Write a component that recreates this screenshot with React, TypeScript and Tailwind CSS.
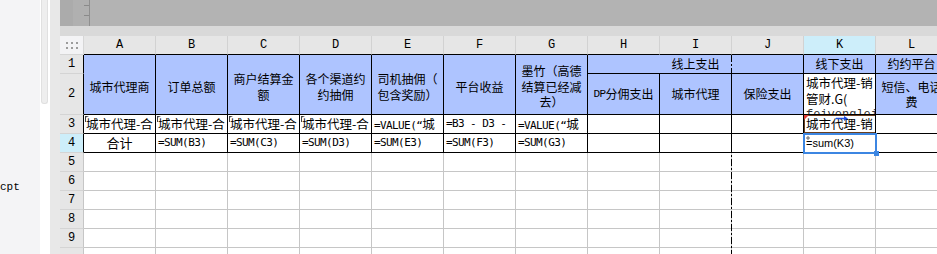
import React from 'react';

const COLS = ['A', 'B', 'C', 'D', 'E', 'F', 'G', 'H', 'I', 'J', 'K', 'L'];

const cjk = "font-['Noto_Sans_CJK_SC',sans-serif]";
const mono = "font-['DejaVu_Sans_Mono','Noto_Sans_CJK_SC',monospace] text-[11px] tracking-[-0.6px]";
const serifMono = "font-['Liberation_Mono','Noto_Sans_CJK_SC',monospace]";

// merged header cells A-G (rows 1-2)
const heads: string[][] = [
  ['城市代理商'],
  ['订单总额'],
  ['商户结算金', '额'],
  ['各个渠道约', '约抽佣'],
  ['司机抽佣（', '包含奖励）'],
  ['平台收益'],
  ['墨竹（高德', '结算已经减', '去）'],
];

const Marker: React.FC = () => (
  <svg className="absolute left-px top-px" width="4" height="6" viewBox="0 0 4 6">
    <path d="M0 0 L4 0 L1 1.5 L1 6 L0 6 Z" fill="#444" />
  </svg>
);

const RowNum: React.FC<{ n?: number; dark?: boolean; active?: boolean }> = ({ n, dark, active }) => (
  <div
    className={`${active ? 'bg-[#cdeefa]' : 'bg-[#e6e6e6]'} border-r border-b ${
      dark ? 'border-r-black' : 'border-r-[#c6c6c6]'
    } border-b-[#d4d4d4] flex items-center justify-center text-[12px] text-black ${serifMono}`}
  >
    {n}
  </div>
);

const Sheet: React.FC = () => {
  return (
    <div className="relative grid w-max grid-cols-[24px_repeat(12,72px)] grid-rows-[19px_19px_41px_19px_19px_19px_19px_19px_19px_19px_19px] text-black">
      {/* column header */}
      <div className="bg-[#f3f3f5] border-r border-b border-[#d6d6d6] flex items-center justify-center">
        <svg width="12" height="7" viewBox="0 0 12 7">
          {[0, 5, 10].map(x =>
            [0, 5].map(y => <rect key={`${x}-${y}`} x={x} y={y} width="2" height="2" fill="#9c9c9c" />)
          )}
        </svg>
      </div>
      {COLS.map(c => (
        <div
          key={c}
          className={`${c === 'K' ? 'bg-[#cdeefa]' : 'bg-[#e6e6e6]'} border-r border-r-[#d2d2d2] border-b border-b-black flex items-center justify-center text-[12px] ${serifMono}`}
        >
          {c}
        </div>
      ))}

      {/* row 1 */}
      <RowNum n={1} dark />
      {heads.map((lines, i) => (
        <div
          key={i}
          className={`row-span-2 bg-[#aec4ff] border-r border-b border-black flex flex-col items-center justify-center pt-[4px] text-[12px] leading-[15.5px] ${cjk}`}
        >
          {lines.map(l => (
            <span key={l} className="whitespace-nowrap">{l}</span>
          ))}
        </div>
      ))}
      <div className={`col-span-3 bg-[#aec4ff] border-r border-b border-black flex items-center justify-center text-[12px] ${cjk}`}>
        线上支出
      </div>
      <div className={`bg-[#aec4ff] border-r border-b border-black flex items-center justify-center text-[12px] ${cjk}`}>
        线下支出
      </div>
      <div className={`bg-[#aec4ff] border-r border-b border-black flex items-center justify-center text-[12px] whitespace-nowrap overflow-hidden ${cjk}`}>
        约约平台
      </div>

      {/* row 2 */}
      <RowNum n={2} dark />
      <div className={`bg-[#aec4ff] border-r border-b border-black flex items-center justify-center text-[12px] whitespace-nowrap ${cjk}`}>
        <span className={`${serifMono} text-[11px] tracking-[-0.5px]`}>DP</span>分佣支出
      </div>
      <div className={`bg-[#aec4ff] border-r border-b border-black flex items-center justify-center text-[12px] ${cjk}`}>
        城市代理
      </div>
      <div className={`bg-[#aec4ff] border-r border-b border-black flex items-center justify-center text-[12px] ${cjk}`}>
        保险支出
      </div>
      <div className={`bg-white border-r border-b border-black overflow-hidden pl-[2px] pt-px text-[12.5px] leading-[16px] whitespace-nowrap ${cjk}`}>
        <div>城市代理-销</div>
        <div>管财.G(</div>
        <div className={`${serifMono} text-[12px] text-[#333]`}>feiyongleix</div>
      </div>
      <div className={`bg-[#aec4ff] border-r border-b border-black flex flex-col items-center justify-center text-[12px] leading-[15.5px] whitespace-nowrap ${cjk}`}>
        <span>短信、电话</span>
        <span>费</span>
      </div>

      {/* row 3 */}
      <RowNum n={3} dark />
      {[0, 1, 2, 3].map(i => (
        <div key={i} className={`relative bg-white border-r border-b border-black overflow-hidden pl-[2px] text-[12.5px] leading-[17px] whitespace-nowrap ${cjk}`}>
          <Marker />
          城市代理-合
        </div>
      ))}
      <div className={`bg-white border-r border-b border-black overflow-hidden pl-[2px] leading-[17px] whitespace-nowrap ${mono}`}>
        =VALUE(“<span className={`${cjk} text-[12.5px] tracking-normal`}>城</span>
      </div>
      <div className={`bg-white border-r border-b border-black overflow-hidden pl-[2px] leading-[17px] whitespace-pre ${mono}`}>
        =B3 - D3 -
      </div>
      <div className={`bg-white border-r border-b border-black overflow-hidden pl-[2px] leading-[17px] whitespace-nowrap ${mono}`}>
        =VALUE(“<span className={`${cjk} text-[12.5px] tracking-normal`}>城</span>
      </div>
      <div className="bg-white border-r border-b border-black" />
      <div className="bg-white border-r border-b border-black" />
      <div className="bg-white border-r border-b border-black" />
      <div className={`relative bg-white border-r border-b border-black overflow-hidden pl-[2px] text-[12.5px] leading-[17px] whitespace-nowrap ${cjk}`}>
        城市代理-销
        <div className="absolute -left-px -top-px w-[74px] h-[20px] border-2 border-[#6a4020]" />
        <svg className="absolute left-0 top-0" width="5" height="5" viewBox="0 0 5 5">
          <path d="M0 0 L5 0 L0 5 Z" fill="#e0403a" />
        </svg>
        <svg className="absolute left-[32px] top-[1px]" width="12" height="5" viewBox="0 0 12 5">
          <path d="M0 2.5 H9" stroke="#1f4fe0" strokeWidth="1.5" />
          <path d="M8 0 L12 2.5 L8 5 Z" fill="#1f4fe0" />
        </svg>
      </div>
      <div className="bg-white border-r border-b border-black" />

      {/* row 4 */}
      <RowNum n={4} dark active />
      <div className={`bg-white border-r border-b border-black flex items-center justify-center text-[13px] ${cjk}`}>
        合计
      </div>
      {['B', 'C', 'D', 'E', 'F', 'G'].map(c => (
        <div key={c} className={`bg-white border-r border-b border-black flex items-center pl-[2px] ${mono}`}>
          =SUM({c}3)
        </div>
      ))}
      <div className="bg-white border-r border-b border-black" />
      <div className="bg-white border-r border-b border-black" />
      <div className="bg-white border-r border-b border-black" />
      <div className="relative bg-white border-r border-b border-black flex items-center pl-[2px] pt-px text-[11px] font-['Liberation_Sans',sans-serif]">
        =sum(K3)
        <svg className="absolute left-[2px] top-[2px]" width="4" height="4" viewBox="0 0 4 4">
          <path d="M2 0 V4 M0 2 H4" stroke="#666" strokeWidth="1" />
        </svg>
        <div className="absolute -left-px -top-px w-[74px] h-[21px] border-2 border-[#3c86e2]" />
        <div className="absolute left-[70px] top-[17px] w-[5px] h-[5px] bg-[#3c86e2]" />
      </div>
      <div className="bg-white border-r border-b border-black" />

      {/* rows 5-10 */}
      {[5, 6, 7, 8, 9, 10].map(n => (
        <React.Fragment key={n}>
          <RowNum n={n < 10 ? n : undefined} />
          {COLS.map(c => (
            <div key={c} className="bg-white border-r border-b border-[#c6c6c6]" />
          ))}
        </React.Fragment>
      ))}

      {/* page break line */}
      <div className="absolute left-[671px] top-[19px] bottom-0 w-px bg-[repeating-linear-gradient(to_bottom,#000_0px,#000_7px,transparent_7px,transparent_9px,#000_9px,#000_11px,transparent_11px,transparent_13px)]" />
    </div>
  );
};

export default function App() {
  return (
    <div className="w-[937px] h-[254px] overflow-hidden flex bg-white">
      <div className={`w-[40px] shrink-0 bg-[#f4f4f6] pt-[180px] text-[11px] leading-[14px] text-black ${serifMono}`}>
        cpt
      </div>
      <div className="w-[10px] shrink-0 bg-white pl-px pr-[2px]">
        <div className="h-[104px] bg-[#eeeeee] rounded-b-[3px] border-x border-b border-[#e0e0e0]" />
      </div>
      <div className="w-[10px] shrink-0 bg-[#e8e8e8]" />
      <div className="flex-1 min-w-0 flex flex-col overflow-hidden">
        <div className="h-[26px] shrink-0 flex bg-[#b3b3b3]">
          <div className="w-[13px] bg-[#ababab]" />
          <div className="w-[16px] bg-[#b0b0b0] flex flex-col items-end pt-[5px]">
            <div className="w-[5px] h-px bg-[#8a8a8a]" />
            <div className="w-[5px] h-px bg-[#8a8a8a] mt-[9px]" />
          </div>
          <div className="w-px bg-[#8f8f8f]" />
        </div>
        <div className="h-[10px] shrink-0 bg-[#d9d9d9]" />
        <Sheet />
      </div>
    </div>
  );
}
